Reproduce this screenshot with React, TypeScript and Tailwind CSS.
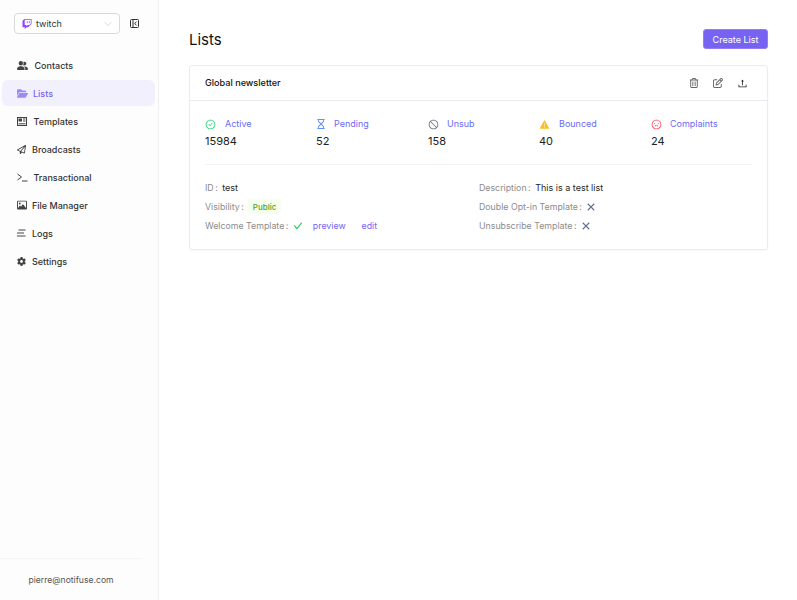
import React from "react";
import { FaTwitch, FaUserGroup, FaFolderOpen, FaRegPaperPlane, FaGear, FaRegImage, FaRegHourglass, FaRegTrashCan, FaRegPenToSquare } from "react-icons/fa6";
import { AiOutlineCheckCircle, AiOutlineStop, AiFillWarning, AiOutlineFrown, AiOutlineCheck, AiOutlineClose, AiOutlineUpload } from "react-icons/ai";
import { ChevronDown } from "lucide-react";

const TemplateIcon = () => (
  <svg width="10" height="9" viewBox="0 0 10 9" fill="none">
    <rect x="0.5" y="0.5" width="9" height="8" stroke="currentColor" strokeWidth="1" />
    <rect x="1.5" y="1.5" width="3.5" height="3" fill="currentColor" />
    <path d="M6 2h2.5M6 4h2.5M1.5 6.8h7" stroke="currentColor" strokeWidth="1" />
  </svg>
);
const TerminalIcon = () => (
  <svg width="11" height="9" viewBox="0 0 11 9" fill="none">
    <path d="M0.5 1 L4.5 4 L0.5 7" stroke="currentColor" strokeWidth="1" />
    <path d="M5 8h5.5" stroke="currentColor" strokeWidth="1" />
  </svg>
);
const LogsIcon = () => (
  <svg width="9" height="8" viewBox="0 0 9 8" fill="none">
    <path d="M1.5 1h7M0 4h7M0 7h8.5" stroke="currentColor" strokeWidth="1" />
  </svg>
);
const CollapseIcon = () => (
  <svg width="9" height="9" viewBox="0 0 9 9" fill="none">
    <rect x="0.5" y="0.5" width="8" height="8" rx="1" stroke="currentColor" strokeWidth="1" />
    <path d="M3 0.5v8" stroke="currentColor" strokeWidth="1" />
    <path d="M6.5 2.8 L4.6 4.5 L6.5 6.2" stroke="currentColor" strokeWidth="1" />
  </svg>
);

const nav = [
  { label: "Contacts", icon: <FaUserGroup size={11} />, w: "w-[17.5px]" },
  { label: "Lists", icon: <FaFolderOpen size={11} className="text-[#9c8bf3]" />, active: true, w: "w-[16px]" },
  { label: "Templates", icon: <TemplateIcon />, w: "w-[16.5px]" },
  { label: "Broadcasts", icon: <FaRegPaperPlane size={9} />, w: "w-[15px]" },
  { label: "Transactional", icon: <TerminalIcon />, w: "w-[16.5px]" },
  { label: "File Manager", icon: <FaRegImage size={10} />, w: "w-[15px]" },
  { label: "Logs", icon: <LogsIcon />, w: "w-[15px]" },
  { label: "Settings", icon: <FaGear size={9} />, w: "w-[15px]" },
];

const stats = [
  { label: "Active", value: "15984", icon: <AiOutlineCheckCircle size={11} className="text-[#34d278]" />, w: "w-[20px]" },
  { label: "Pending", value: "52", icon: <FaRegHourglass size={10} className="text-[#5b8ff9]" />, w: "w-[18px]" },
  { label: "Unsub", value: "158", icon: <AiOutlineStop size={11} className="text-[#6b7280]" />, w: "w-[19px]" },
  { label: "Bounced", value: "40", icon: <AiFillWarning size={11} className="text-[#fbbf24]" />, w: "w-[20px]" },
  { label: "Complaints", value: "24", icon: <AiOutlineFrown size={11} className="text-[#f6465d]" />, w: "w-[19px]" },
];

function Label({ children }: { children: React.ReactNode }) {
  return <span className="text-[8.8px] text-[#8c8c8c]">{children}<span className="ml-[1.5px] mr-[4.5px]">:</span></span>;
}

export default function App() {
  return (
    <div className="flex min-h-[600px] w-[797px] bg-white text-[9px] text-[#1f1f1f] [font-family:Inter,sans-serif]">
      <aside className="flex w-[159px] shrink-0 flex-col border-r border-[#f0f0f0] bg-[#fdfdfd]">
        <div className="flex items-center pl-[14px] pt-[13px]">
          <div className="flex h-[21px] w-[106px] items-center rounded-[4px] border border-[#d9d9d9] bg-white pl-[7px] pr-[5px]">
            <FaTwitch size={10} className="text-[#9146ff]" />
            <span className="ml-[4px] flex-1 pt-[1px] text-[#333]">twitch</span>
            <ChevronDown size={12} strokeWidth={1.2} className="text-[#bfbfbf]" />
          </div>
          <span className="ml-[10px] text-[#333]"><CollapseIcon /></span>
        </div>
        <nav className="mt-[18px] flex flex-col gap-[2px] pl-[2px] pr-[3px]">
          {nav.map((n) => (
            <div
              key={n.label}
              className={`flex h-[26px] items-center rounded-[6px] pl-[15px] ${n.active ? "bg-[#f3f0fe] text-[#7763f1]" : "text-[#333]"}`}
            >
              <span className={`flex ${n.w} shrink-0 justify-start text-[#444]`}>{n.icon}</span>
              <span className="pt-[1px] font-medium">{n.label}</span>
            </div>
          ))}
        </nav>
        <div className="mr-[16px] mt-auto border-t border-[#f5f5f5]" />
        <div className="flex h-[41px] items-center justify-center pr-[16px] pt-[2px] text-[8.6px] text-[#555]">pierre@notifuse.com</div>
      </aside>

      <main className="flex-1 pl-[30px] pr-[29px] pt-[29px]">
        <div className="flex h-[20px] items-center justify-between">
          <h1 className="pt-[3px] text-[15px] font-normal text-[#111]">Lists</h1>
          <button className="flex h-[20px] w-[65px] items-center justify-center rounded-[3px] border border-[#8f7ff5] bg-[#7763f1] pt-[1px] text-white">Create List</button>
        </div>
        <section className="mt-[16px] rounded-[3px] border border-[#ececec] shadow-[0_1px_2px_rgba(0,0,0,0.03)]">
          <header className="flex h-[35px] items-center justify-between border-b border-[#e8ebf0] pl-[15px] pr-[19px]">
            <span className="text-[9.1px] font-medium text-[#111]">Global newsletter</span>
            <div className="flex items-center gap-[14px] text-[#666]">
              <FaRegTrashCan size={10} />
              <FaRegPenToSquare size={10} />
              <AiOutlineUpload size={11} className="text-[#222]" />
            </div>
          </header>
          <div className="px-[15px]">
            <div className="grid grid-cols-[111px_112px_111px_112px_auto] pb-[15px] pt-[16px]">
              {stats.map((s) => (
                <div key={s.label}>
                  <div className="flex h-[14px] items-center text-[#6a6af5]">
                    <span className={`flex ${s.w} shrink-0 justify-start`}>{s.icon}</span>
                    <span>{s.label}</span>
                  </div>
                  <div className="mt-[2px] text-[11px] leading-[16px] text-[#222]">{s.value}</div>
                </div>
              ))}
            </div>
            <div className="border-t border-[#f2f2f2]" />
            <div className="grid grid-cols-[274px_auto] gap-y-[5.5px] pb-[16px] pt-[15px]">
              <div className="flex h-[14px] items-center pt-[1px]"><Label>ID</Label><span>test</span></div>
              <div className="flex h-[14px] items-center pt-[1px]"><Label>Description</Label><span>This is a test list</span></div>
              <div className="flex h-[14px] items-center"><Label>Visibility</Label><span className="rounded-[2px] bg-[#f6ffed] px-[4.5px] py-[1.5px] text-[8px] font-medium text-[#52a420]">Public</span></div>
              <div className="flex h-[14px] items-center pt-[1px]"><Label>Double Opt-in Template</Label><AiOutlineClose size={10} stroke="currentColor" strokeWidth={30} className="text-[#475a80]" /></div>
              <div className="flex h-[14px] items-center"><Label>Welcome Template</Label><AiOutlineCheck size={10} stroke="currentColor" strokeWidth={40} className="text-[#22c55e]" /><span className="ml-[10px] text-[8.8px] text-[#7763f1]">preview</span><span className="ml-[16px] text-[8.8px] text-[#7763f1]">edit</span></div>
              <div className="flex h-[14px] items-center"><Label>Unsubscribe Template</Label><AiOutlineClose size={10} stroke="currentColor" strokeWidth={30} className="text-[#475a80]" /></div>
            </div>
          </div>
        </section>
      </main>
    </div>
  );
}
